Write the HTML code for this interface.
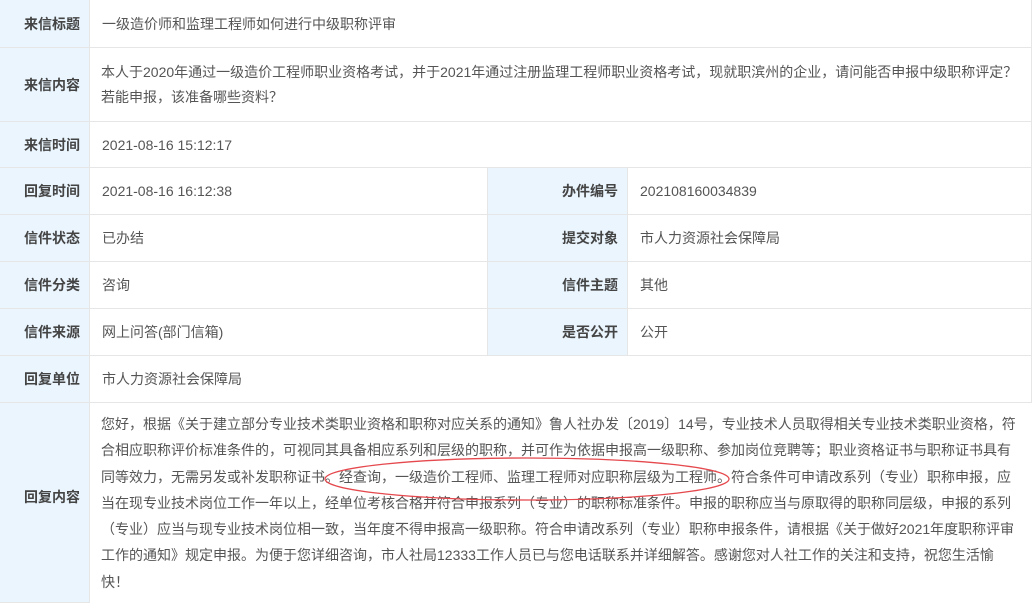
<!DOCTYPE html>
<html><head><meta charset="utf-8"><style>
*{margin:0;padding:0;box-sizing:border-box}
body{width:1032px;height:590px;overflow:hidden;background:#fff;font-family:"Liberation Sans","Noto Sans CJK SC",sans-serif;font-size:14px;color:#555}
.c{position:absolute;border-bottom:1px solid #e6e6e6;border-right:1px solid #e6e6e6}
.l{background:#eaf5fe;font-weight:bold;color:#444;text-align:right;padding-right:9px;display:flex;align-items:center;justify-content:flex-end}
.v{padding-left:12px;display:flex;align-items:center}
.t{position:absolute;left:101px;white-space:nowrap;line-height:26.3px}
</style></head><body>
<div class="c l" style="left:0;top:0;width:90px;height:48px">来信标题</div>
<div class="c v" style="left:90px;top:0;width:942px;height:48px">一级造价师和监理工程师如何进行中级职称评审</div>
<div class="c l" style="left:0;top:48px;width:90px;height:74px">来信内容</div>
<div class="c" style="left:90px;top:48px;width:942px;height:74px"></div>
<div class="t" style="top:60px;line-height:25px">本人于2020年通过一级造价工程师职业资格考试，并于2021年通过注册监理工程师职业资格考试，现就职滨州的企业，请问能否申报中级职称评定？<br>若能申报，该准备哪些资料？</div>
<div class="c l" style="left:0;top:122px;width:90px;height:46px">来信时间</div>
<div class="c v" style="left:90px;top:122px;width:942px;height:46px">2021-08-16 15:12:17</div>

<div class="c l" style="left:0;top:168px;width:90px;height:47px">回复时间</div>
<div class="c v" style="left:90px;top:168px;width:398px;height:47px">2021-08-16 16:12:38</div>
<div class="c l" style="left:488px;top:168px;width:140px;height:47px">办件编号</div>
<div class="c v" style="left:628px;top:168px;width:404px;height:47px">202108160034839</div>

<div class="c l" style="left:0;top:215px;width:90px;height:47px">信件状态</div>
<div class="c v" style="left:90px;top:215px;width:398px;height:47px">已办结</div>
<div class="c l" style="left:488px;top:215px;width:140px;height:47px">提交对象</div>
<div class="c v" style="left:628px;top:215px;width:404px;height:47px">市人力资源社会保障局</div>

<div class="c l" style="left:0;top:262px;width:90px;height:47px">信件分类</div>
<div class="c v" style="left:90px;top:262px;width:398px;height:47px">咨询</div>
<div class="c l" style="left:488px;top:262px;width:140px;height:47px">信件主题</div>
<div class="c v" style="left:628px;top:262px;width:404px;height:47px">其他</div>

<div class="c l" style="left:0;top:309px;width:90px;height:47px">信件来源</div>
<div class="c v" style="left:90px;top:309px;width:398px;height:47px">网上问答(部门信箱)</div>
<div class="c l" style="left:488px;top:309px;width:140px;height:47px">是否公开</div>
<div class="c v" style="left:628px;top:309px;width:404px;height:47px">公开</div>

<div class="c l" style="left:0;top:356px;width:90px;height:47px">回复单位</div>
<div class="c v" style="left:90px;top:356px;width:942px;height:47px">市人力资源社会保障局</div>

<div class="c l" style="left:0;top:403px;width:90px;height:200px;padding-bottom:12px">回复内容</div>
<div class="t" style="top:411px">您好，根据《关于建立部分专业技术类职业资格和职称对应关系的通知》鲁人社办发〔2019〕14号，专业技术人员取得相关专业技术类职业资格，符<br>合相应职称评价标准条件的，可视同其具备相应系列和层级的职称，并可作为依据申报高一级职称、参加岗位竞聘等；职业资格证书与职称证书具有<br>同等效力，无需另发或补发职称证书。经查询，一级造价工程师、监理工程师对应职称层级为工程师。符合条件可申请改系列（专业）职称申报，应<br>当在现专业技术岗位工作一年以上，经单位考核合格并符合申报系列（专业）的职称标准条件。申报的职称应当与原取得的职称同层级，申报的系列<br>（专业）应当与现专业技术岗位相一致，当年度不得申报高一级职称。符合申请改系列（专业）职称申报条件，请根据《关于做好2021年度职称评审<br>工作的通知》规定申报。为便于您详细咨询，市人社局12333工作人员已与您电话联系并详细解答。感谢您对人社工作的关注和支持，祝您生活愉<br>快！</div>
<svg style="position:absolute;left:0;top:0" width="1032" height="590"><ellipse cx="527" cy="479" rx="202" ry="21" fill="none" stroke="#e5484d" stroke-width="1.3"/></svg>
</body></html>
